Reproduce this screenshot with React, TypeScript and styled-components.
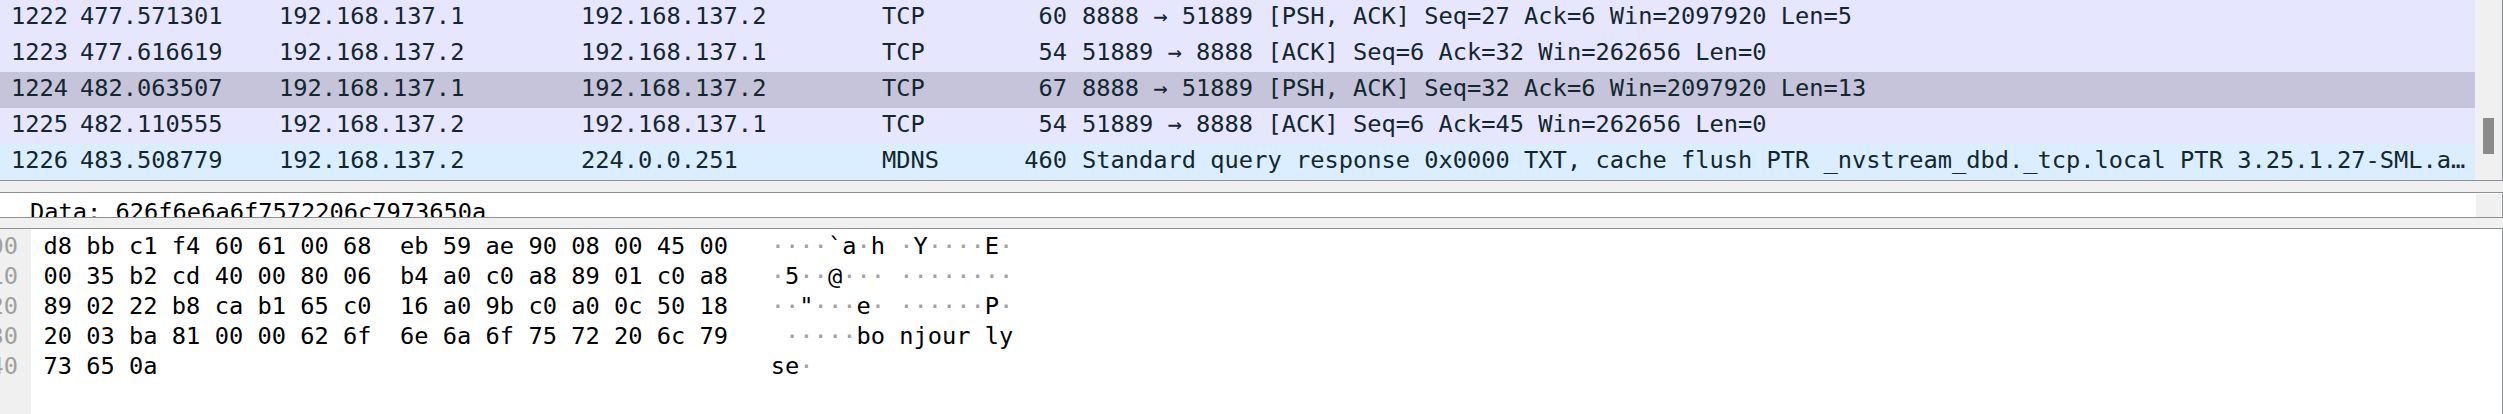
import React from "react";
import styled, { createGlobalStyle } from "styled-components";

const GlobalStyle = createGlobalStyle`
  html, body { margin: 0; padding: 0; background: #f0f0f0; overflow: hidden; }
  #root { width: 2503px; height: 414px; }
`;

const MONO = `"DejaVu Sans Mono", "Liberation Mono", monospace`;
const LINE = "#8e9096";

const Window = styled.div`
  width: 2503px;
  height: 414px;
  display: flex;
  flex-direction: column;
  font-family: ${MONO};
  font-size: 23.7px;
  background: #f0f0f0;
  overflow: hidden;
`;

const PacketListPane = styled.div`
  flex: none;
  display: flex;
  height: 180px;
  border-bottom: 1px solid ${LINE};
  border-right: 1px solid ${LINE};
  background: #f0f0f0;
`;

const Rows = styled.div`
  flex: 1;
  min-width: 0;
  display: flex;
  flex-direction: column;
`;

const Row = styled.div<{ $bg: string }>`
  display: grid;
  grid-template-columns: 75px 199px 302px 301px 100px 97px 1fr;
  height: 36px;
  line-height: 32px;
  background: ${(p) => p.$bg};
  color: #12272e;
  white-space: pre;
`;

const Cell = styled.div<{ $right?: boolean; $pl?: number }>`
  min-width: 0;
  overflow: hidden;
  text-overflow: ellipsis;
  text-align: ${(p) => (p.$right ? "right" : "left")};
  padding-left: ${(p) => (p.$right ? 0 : p.$pl ?? 5)}px;
  padding-right: ${(p) => (p.$right ? 7 : 0)}px;
`;

const VScroll = styled.div`
  flex: none;
  width: 27px;
  background: #f0f0f0;
  display: flex;
  flex-direction: column;
  align-items: center;
`;

const Thumb = styled.div<{ $top: number; $height: number }>`
  margin-top: ${(p) => p.$top}px;
  height: ${(p) => p.$height}px;
  width: 11px;
  background: #8b8b8b;
`;

const Splitter = styled.div<{ $h: number }>`
  flex: none;
  height: ${(p) => p.$h}px;
  background: #f0f0f0;
`;

const DetailsPane = styled.div`
  flex: none;
  display: flex;
  height: 24px;
  background: #ffffff;
  border-top: 1px solid ${LINE};
  border-bottom: 1px solid ${LINE};
  border-right: 1px solid ${LINE};
  overflow: hidden;
`;

const DetailsText = styled.div`
  flex: 1;
  min-width: 0;
  padding: 3px 0 0 30px;
  line-height: 32px;
  color: #000;
  white-space: pre;
  overflow: hidden;
`;

const DetailsScroll = styled.div`
  flex: none;
  width: 25px;
  margin: 1px 1px 0 0;
  background: #f0f0f0;
`;

const HexPane = styled.div`
  flex: 1;
  display: flex;
  background: #ffffff;
  border-top: 1px solid ${LINE};
  border-right: 1px solid ${LINE};
  overflow: hidden;
`;

const OffsetColumn = styled.div`
  flex: none;
  width: 31px;
  padding-top: 2px;
  background: #f0f0f0;
  color: #a0a0a0;
`;

const OffsetLine = styled.div`
  height: 30px;
  line-height: 30px;
  display: flex;
  justify-content: flex-end;
  padding-right: 13px;
  overflow: hidden;
  white-space: pre;
`;

const HexBody = styled.div`
  flex: 1;
  padding: 2px 0 0 12.5px;
`;

const HexLine = styled.div`
  height: 30px;
  line-height: 30px;
  display: flex;
  white-space: pre;
  color: #000;
`;

const Bytes = styled.span`
  flex: none;
  width: 51ch;
`;

const Ascii = styled.span``;

const Dot = styled.span`
  color: #a0a0a0;
`;

type Packet = {
  no: string;
  time: string;
  src: string;
  dst: string;
  proto: string;
  len: string;
  info: string;
  bg: string;
};

const TCP = "#e7e6ff";
const UDP = "#daeeff";
const SEL = "#c6c4da";

const packets: Packet[] = [
  { no: "1222", time: "477.571301", src: "192.168.137.1", dst: "192.168.137.2", proto: "TCP", len: "60", info: "8888 → 51889 [PSH, ACK] Seq=27 Ack=6 Win=2097920 Len=5", bg: TCP },
  { no: "1223", time: "477.616619", src: "192.168.137.2", dst: "192.168.137.1", proto: "TCP", len: "54", info: "51889 → 8888 [ACK] Seq=6 Ack=32 Win=262656 Len=0", bg: TCP },
  { no: "1224", time: "482.063507", src: "192.168.137.1", dst: "192.168.137.2", proto: "TCP", len: "67", info: "8888 → 51889 [PSH, ACK] Seq=32 Ack=6 Win=2097920 Len=13", bg: SEL },
  { no: "1225", time: "482.110555", src: "192.168.137.2", dst: "192.168.137.1", proto: "TCP", len: "54", info: "51889 → 8888 [ACK] Seq=6 Ack=45 Win=262656 Len=0", bg: TCP },
  { no: "1226", time: "483.508779", src: "192.168.137.2", dst: "224.0.0.251", proto: "MDNS", len: "460", info: "Standard query response 0x0000 TXT, cache flush PTR _nvstream_dbd._tcp.local PTR 3.25.1.27-SML.a…", bg: UDP },
];

const hexRows: string[][] = [
  "d8 bb c1 f4 60 61 00 68 eb 59 ae 90 08 00 45 00",
  "00 35 b2 cd 40 00 80 06 b4 a0 c0 a8 89 01 c0 a8",
  "89 02 22 b8 ca b1 65 c0 16 a0 9b c0 a0 0c 50 18",
  "20 03 ba 81 00 00 62 6f 6e 6a 6f 75 72 20 6c 79",
  "73 65 0a",
].map((s) => s.split(" "));

function hexText(bytes: string[]): string {
  const a = bytes.slice(0, 8).join(" ");
  const b = bytes.slice(8).join(" ");
  return b ? `${a}  ${b}` : a;
}

function AsciiCells({ bytes }: { bytes: string[] }) {
  const parts: React.ReactNode[] = [];
  bytes.forEach((h, i) => {
    if (i === 8) parts.push(" ");
    const v = parseInt(h, 16);
    if (v >= 0x20 && v < 0x7f) {
      parts.push(<React.Fragment key={i}>{String.fromCharCode(v)}</React.Fragment>);
    } else {
      parts.push(<Dot key={i}>·</Dot>);
    }
  });
  return <Ascii>{parts}</Ascii>;
}

export default function App() {
  return (
    <>
      <GlobalStyle />
      <Window>
        <PacketListPane>
          <Rows>
            {packets.map((p) => (
              <Row key={p.no} $bg={p.bg}>
                <Cell $right>{p.no}</Cell>
                <Cell>{p.time}</Cell>
                <Cell>{p.src}</Cell>
                <Cell>{p.dst}</Cell>
                <Cell>{p.proto}</Cell>
                <Cell $right>{p.len}</Cell>
                <Cell $pl={8}>{p.info}</Cell>
              </Row>
            ))}
          </Rows>
          <VScroll>
            <Thumb $top={118} $height={36} />
          </VScroll>
        </PacketListPane>
        <Splitter $h={11} />
        <DetailsPane>
          <DetailsText>Data: 626f6e6a6f7572206c7973650a</DetailsText>
          <DetailsScroll />
        </DetailsPane>
        <Splitter $h={10} />
        <HexPane>
          <OffsetColumn>
            {hexRows.map((_, i) => (
              <OffsetLine key={i}>
                <span>{`00${i}0`}</span>
              </OffsetLine>
            ))}
          </OffsetColumn>
          <HexBody>
            {hexRows.map((bytes, i) => (
              <HexLine key={i}>
                <Bytes>{hexText(bytes)}</Bytes>
                <AsciiCells bytes={bytes} />
              </HexLine>
            ))}
          </HexBody>
        </HexPane>
      </Window>
    </>
  );
}
